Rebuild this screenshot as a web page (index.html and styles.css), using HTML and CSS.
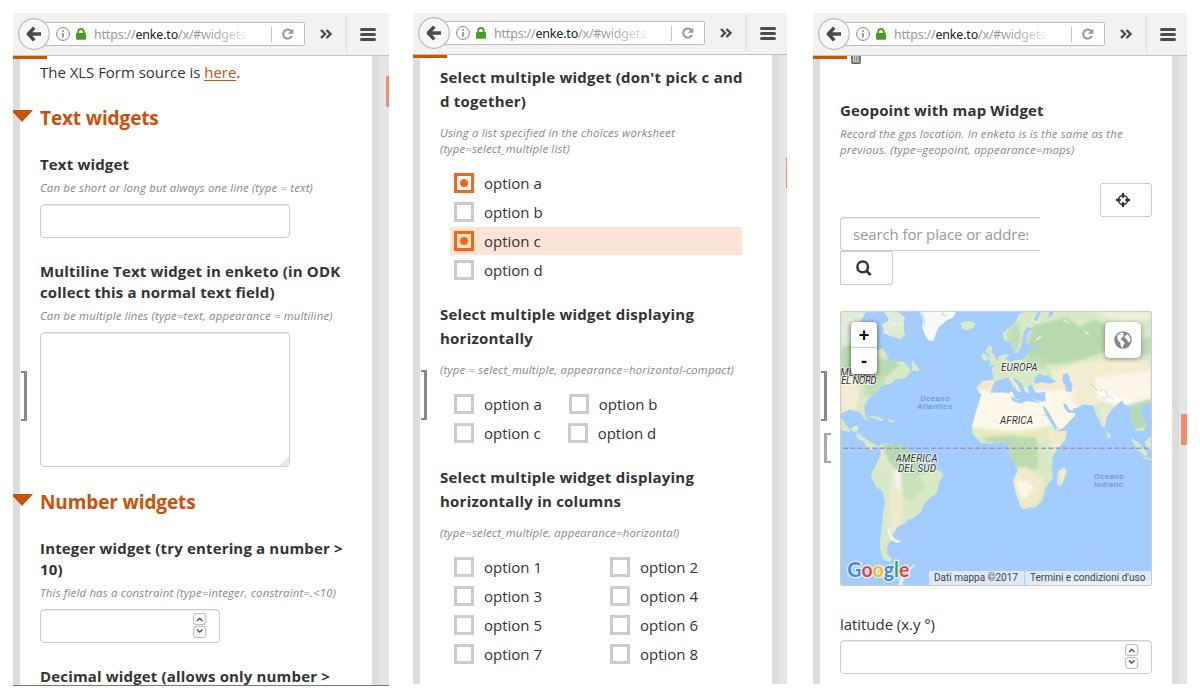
FILE: index.html
```html
<!DOCTYPE html>
<html lang="en">
<head>
<meta charset="utf-8">
<title>Enketo widgets</title>
<link rel="stylesheet" href="styles.css">
</head>
<body>
<svg class="defs" width="0" height="0">
  <symbol id="back" viewBox="0 0 32 32"><circle cx="16" cy="16" r="15.3" fill="#f7f7f6" stroke="#bcbab8" stroke-width="1.2"/><path d="M16.3 9.7 10.3 16l6 6.3M11 16h12" fill="none" stroke="#4b4b4b" stroke-width="3.4" stroke-linejoin="round"/></symbol>
  <symbol id="info" viewBox="0 0 14 14"><circle cx="7" cy="7" r="6.4" fill="none" stroke="#858585" stroke-width="1"/><path d="M7 6v4.5M7 3.2v1.7" stroke="#858585" stroke-width="1.6"/></symbol>
  <symbol id="lock" viewBox="0 0 10 12"><path d="M2.2 6V3.8a2.8 2.8 0 0 1 5.6 0V6" fill="none" stroke="#4a9b25" stroke-width="1.8"/><rect y="5" width="10" height="6.8" rx="1" fill="#4a9b25"/></symbol>
  <symbol id="reload" viewBox="0 0 12 12"><path d="M9.2 3.2A4.5 4.5 0 1 0 9.9 7.8" fill="none" stroke="#8a98a5" stroke-width="2"/><path d="M11.3.4v5.4H5.8z" fill="#8a98a5"/></symbol>
  <symbol id="more" viewBox="0 0 12 10"><path d="M1 1l4 4-4 4M6.5 1l4 4-4 4" fill="none" stroke="#4b4b4b" stroke-width="2.4"/></symbol>
  <symbol id="menu" viewBox="0 0 16 13"><path d="M1.5 1.5h13M1.5 6.5h13M1.5 11.5h13" stroke="#4b4b4b" stroke-width="3" stroke-linecap="round"/></symbol>
  <symbol id="spin" viewBox="0 0 14 26"><rect x=".6" y=".6" width="12.2" height="11" rx="2.5" fill="#fafafa" stroke="#b7b7b7"/><rect x=".6" y="13.4" width="12.2" height="11" rx="2.5" fill="#fafafa" stroke="#b7b7b7"/><path d="M4 8l2.7-2.6L9.400 8M4 16.500l2.700 2.600 2.700-2.600" fill="none" stroke="#444" stroke-width="1.300"/></symbol>
</svg>
<main class="screens">

<section class="screen first">
  <header class="bar">
    <svg class="back"><use href="#back"/></svg>
    <div class="url"><svg class="info"><use href="#info"/></svg><svg class="lock"><use href="#lock"/></svg><span class="addr">https://<b>enke.to</b>/x/#<span class="fade">widgets</span></span><i class="split"></i><svg class="reload"><use href="#reload"/></svg></div>
    <svg class="more"><use href="#more"/></svg><i class="sep"></i><svg class="menu"><use href="#menu"/></svg>
  </header>
  <div class="page">
    <i class="progress"></i>
    <div class="form">
      <p class="intro">The XLS Form source is <a>here</a>.</p>
      <h2 class="head">Text widgets</h2>
      <h3 class="label">Text widget</h3>
      <p class="hint">Can be short or long but always one line (type = text)</p>
      <div class="input wide"></div>
      <h3 class="label after">Multiline Text widget in enketo (in ODK collect this a normal text field)</h3>
      <p class="hint">Can be multiple lines (type=text, appearance = multiline)</p>
      <div class="input wide area"><svg width="9" height="9" viewBox="0 0 9 9"><path d="M9 0v9H0V7h2V5h2V3h2V1h2V0z" fill="#e8e8e8"/></svg></div>
      <h2 class="head second">Number widgets</h2>
      <h3 class="label">Integer widget (try entering a number &gt; 10)</h3>
      <p class="hint">This field has a constraint (type=integer, constraint=.&lt;10)</p>
      <div class="input num"><svg class="spin"><use href="#spin"/></svg></div>
      <h3 class="label after">Decimal widget (allows only number &gt;</h3>
    </div>
    <i class="bracket"></i><i class="thumb t1"></i>
  </div>
</section>

<section class="screen middle">
  <header class="bar">
    <svg class="back"><use href="#back"/></svg>
    <div class="url"><svg class="info"><use href="#info"/></svg><svg class="lock"><use href="#lock"/></svg><span class="addr">https://<b>enke.to</b>/x/#<span class="fade">widgets</span></span><i class="split"></i><svg class="reload"><use href="#reload"/></svg></div>
    <svg class="more"><use href="#more"/></svg><i class="sep"></i><svg class="menu"><use href="#menu"/></svg>
  </header>
  <div class="page">
    <i class="progress"></i>
    <div class="form">
      <h3 class="label">Select multiple widget (don't pick c and d together)</h3>
      <p class="hint">Using a list specified in the choices worksheet (type=select_multiple list)</p>
      <div class="options">
        <div class="opt on"><i class="box"></i>option a</div>
        <div class="opt"><i class="box"></i>option b</div>
        <div class="opt on lit"><i class="box"></i>option c</div>
        <div class="opt"><i class="box"></i>option d</div>
      </div>
      <h3 class="label">Select multiple widget displaying horizontally</h3>
      <p class="hint">(type = select_multiple, appearance=horizontal-compact)</p>
      <div class="options">
        <div class="line"><div class="opt"><i class="box"></i>option a</div><div class="opt compact"><i class="box"></i>option b</div></div>
        <div class="line"><div class="opt"><i class="box"></i>option c</div><div class="opt compact"><i class="box"></i>option d</div></div>
      </div>
      <h3 class="label">Select multiple widget displaying horizontally in columns</h3>
      <p class="hint">(type=select_multiple, appearance=horizontal)</p>
      <div class="options columns">
        <div class="opt"><i class="box"></i>option 1</div><div class="opt"><i class="box"></i>option 2</div>
        <div class="opt"><i class="box"></i>option 3</div><div class="opt"><i class="box"></i>option 4</div>
        <div class="opt"><i class="box"></i>option 5</div><div class="opt"><i class="box"></i>option 6</div>
        <div class="opt"><i class="box"></i>option 7</div><div class="opt"><i class="box"></i>option 8</div>
      </div>
    </div>
    <i class="bracket"></i><i class="thumb t2"></i>
  </div>
</section>

<section class="screen last">
  <header class="bar">
    <svg class="back"><use href="#back"/></svg>
    <div class="url"><svg class="info"><use href="#info"/></svg><svg class="lock"><use href="#lock"/></svg><span class="addr">https://<b>enke.to</b>/x/#<span class="fade">widgets</span></span><i class="split"></i><svg class="reload"><use href="#reload"/></svg></div>
    <svg class="more"><use href="#more"/></svg><i class="sep"></i><svg class="menu"><use href="#menu"/></svg>
  </header>
  <div class="page">
    <i class="progress"></i>
    <div class="form">
      <svg class="trash" width="10" height="8" viewBox="0 0 10 8"><path d="M1 0v6.200q0 1 1 1h6q1 0 1-1V0" fill="#ddd" stroke="#666" stroke-width="1.700"/><path d="M3.500 0v5.500M5.300 0v5.500M7.100 0v5.500" fill="none" stroke="#777" stroke-width=".9"/></svg>
      <h3 class="label">Geopoint with map Widget</h3>
      <p class="hint">Record the gps location. In enketo is is the same as the previous. (type=geopoint, appearance=maps)</p>
      <div class="btn locate"><svg width="14" height="14" viewBox="0 0 14 14"><circle cx="7" cy="7" r="4.600" fill="none" stroke="#333" stroke-width="1.500"/><path d="M7 0v4.700M7 9.300V14M0 7h4.700M9.300 7H14" stroke="#333" stroke-width="2.400"/></svg></div>
      <div class="input search"><span>search for place or address</span></div>
      <div class="btn find"><svg width="16" height="16" viewBox="0 0 16 16"><circle cx="6.700" cy="6.900" r="5.300" fill="none" stroke="#333" stroke-width="2.500"/><path d="M10.500 10.900l4.200 4" stroke="#333" stroke-width="2.700"/></svg></div>
      <div class="map">
        <svg class="world" viewBox="33 36 930 819">
          <defs>
            <filter id="soft" x="-10%" y="-10%" width="120%" height="120%"><feGaussianBlur stdDeviation="5"/></filter>
            <clipPath id="land">
              <path d="M33 36h102l-8 22 25 18 22-12 30 8 18 32-8 14-28-8-30-12-8 6-8 24 14 16 14 14 8 26 20-2 25 4 15 14 7 14-16 20-28 4-12 10-35 12-15 20-20 13-14 26 2 24 9 19-10-4-15-22-30-7-24 11-9 24 8 27 23 5 13-19 16 2-7 24 4 14 19 7 8 20 14 7 17-8 16-13 52 3 27 20 27 10 14 17-4 17 25 4 28 10 15 12-13 21-7 34-21 16-20 21-7 20-22 19-18 6-9 12-22 9-8 14-9 9-2 16-10 18-2 23 17 19-13 5-17-11-9-32 3-38 5-47 7-52-6-28-20-18-15-30 3-12 20-39 7-15-2-18-13-10-22-13-24-17-30-14-18-23-20-27-9-20z"/>
              <path d="M246 181l15 17 7 15-23-1z"/>
              <path d="M162 36l42 0 20 16-3 31 5 28-13-15-28-5-20-18 12-15z"/>
              <path d="M392 68l24-6 20 8-4 12-18 9-18-5z"/>
              <path d="M456 244l35-5-6-34 12-11 10-26 26-7 8 7 14-4-3-13-11-23-19-9-4-20 13-12 22-15 14-29 20-7H963v272l-24 6-10 25 21 35-12 20-22-2-14-39 3-28-20-11-10-13-31 30-16 24-3 24-7 5-23-47-5-20-31-4-18 11-13 1 8 20-12 13-24 25-26 14-6-1-9-31-16-22-12-21-3-16-18-7-18-7-30 9-23-16 1-14-26 2-54 10-10-2-11-18z"/>
              <path d="M459 180l-6-13 8-9 12 9-2 16zM468 154l7-19 12 6-2 15 12 16 5 21-25 6 5-12-9-9 6-10z"/>
              <path d="M455 282l55-6 29 4 8 24 27 7 16-7 46 6 9 16 25 45 10 23 32-1-7 27-25 31-14 24 1 61-20 27-10 38-20 20-32 6-11-2-15-40-10-43 15-31-18-32-12-20 2-26-20-7-35 5-29-2-24-27-1-28 12-42z"/>
              <path d="M703 499l7 15-15 42-11 1-4-14 4-28z"/>
              <path d="M550 251l8 7-10 3zM571 268l16-4-7 10zM538 230l16 6 18 27-7 2-25-27z"/>
              <path d="M833 396l11 10-7 11-6-7zM906 414l23 17 24 29-4 11-25-20-20-30zM940 470l23 6v5l-23-5zM945 425l18-18v40l-12-4z"/>
              <path d="M118 349l27 1 19 10-11 3-22-9-15-1zM171 356l28 7-18 5z"/>
            </clipPath>
          </defs>
          <rect x="33" y="36" width="930" height="819" fill="#a3ccff"/>
          <g clip-path="url(#land)">
            <rect x="33" y="36" width="930" height="819" fill="#d8eac5"/>
            <g filter="url(#soft)">
              <path d="M33 36h230v75l-50-15-50 10-80 5-50 30z" fill="#e2ebda"/>
              <path d="M33 145l55-18 20 45 90 4 10 22-70 54-50-42-55 10z" fill="#b9dbb3"/>
              <path d="M33 210l40 18 15 60-12 42-43-2z" fill="#f3edd4"/>
              <path d="M105 240l48-18 12 25-24 50-40-12z" fill="#c0dfb6"/>
              <path d="M33 330l40 10 12 44-15-5z" fill="#eee9ca"/>
              <path d="M155 420l70-20 72 44 40 25-17 40-60 15-45-3-40-38z" fill="#b6d8ae"/>
              <path d="M215 525l50-5 20 40-40 40-25-10z" fill="#c8e2b8"/>
              <path d="M150 465l38 48 5 60 24-8-5 94-8 50-28-22 8-190-36-50z" fill="#f1e9cd"/>
              <path d="M192 510l20 2-1 60-15-8z" fill="#f8f5ec"/>
              <path d="M610 78l100-26 40 30 40-22 60 20 30 56-60 20-60 22-70 14-90-2-12-50z" fill="#b7d9b0"/>
              <path d="M530 90l38-25 4 57-14 40-22-19zM582 172l60 2 8 34-63-12z" fill="#bfdeb6"/>
              <path d="M795 36h168v20l-80 20z" fill="#eef0d8"/>
              <path d="M850 120l60 6 53-18v54l-80 14-50-14z" fill="#bcdcb4"/>
              <path d="M665 215l80-28 80-7 72-10 66 20v130l-80 6-70-20-45 20-70 4z" fill="#f3edd3"/>
              <path d="M793 235l80-12 90-6v86l-66 12-94-26z" fill="#fbf6e9"/>
              <path d="M800 270l70 22 60 20-10 12-70-13-50-20z" fill="#fffdf7"/>
              <path d="M885 316l78-20v78l-50 16-20-33z" fill="#b9dab0"/>
              <path d="M810 320l40 5-8 70-22-10z" fill="#edeacb"/>
              <path d="M456 240l42 1-16 38-28-8z" fill="#f1eacb"/>
              <path d="M610 250l65-6 22 32-46 6-40-9z" fill="#f0eacc"/>
              <path d="M420 270h300l28 80-50 20-35 8-90 18-155-9z" fill="#fdf7e8"/>
              <path d="M635 270l65 5 60 70-60 50-30-23z" fill="#fdf7e8"/>
              <path d="M418 382l130 13 98-10 30 24-53 20-60 3-140-20z" fill="#e7e9c1"/>
              <path d="M455 413l90-7 30 6 45 0 5 94-72 10-30-80-50-10z" fill="#bcdcb0"/>
              <path d="M653 385l60 8-20 50-30 10z" fill="#f0ebcd"/>
              <path d="M548 503l42-2 55 40-20 65-50 22-40-90z" fill="#f0e9ca"/>
              <path d="M560 545l32-2 20 20-27 33-17-12z" fill="#fcf7ea"/>
            </g>
            <path d="M55 60h12v10h14M100 78l16 8M55 110l13-12M178 65l22 10 15-8M700 60l16 8M764 95l12 8M604 60l24 8M618 120l16-12" fill="none" stroke="#eef4e5" stroke-width="4"/>
            <path d="M808 274l10-5M826 270l6 18-9 9-12-9M780 250l24 22M832 288l20 9M653 344l-15 2" fill="none" stroke="#c9c6c0" stroke-width="2"/>
            <path d="M686 510h26v18l-18 30z" fill="#f1eacb"/>
          </g>
          <g fill="#a3ccff">
            <path d="M108 36h54l-14 30 12 16 2 28-8 34-14 8-17-15-18-4-13-30 8-12-8-28zM97 88l20 4-2 26-20-18z"/>
            <path d="M550 162l14-3 12-28 5-34 10-17 18 6-17 16-3 30 14 9 24-5v7l-31 6-6 19-13 11-24 1-11 8-16-12 6-9z"/>
            <path d="M622 36h11l-13 26-9 0zM657 36h16l-10 14-8 0z"/>
            <path d="M612 245l5-15 9-10 18 8 12-5 4 8 18 14-20 6-22-5-20 6z"/>
            <path d="M698 225l13-7 7 9 2 16 8 8-4 25-17-3-2-18-8-12z"/>
            <path d="M494 244l40-11 28 40 10 4-4-16-18-20 4-7 21 16 10 22 12 10-4-22 12-8 6 16 7 10 28-2v27l-11 2-30-8-18 7-32-8-8-20-66 2z"/>
            <path d="M637 317l8 3 12 18 14 25 11 21-5 7-15-23-18-31zM700 309l10 5 9 16 20 2-4 7-20-1-12-13z"/>
            <path d="M125 184l16-2-7 23z"/>
          </g>
          <g fill="#f1eacb"><path d="M535 232l8-2 20 26-3 9-5 0 1-9z"/><path d="M548 252l7 0-1 10-6 0z"/></g>
          <path d="M269 36h108l-6 15-22 11-25 22-14 38-12 0-12-13-10-28 4-21z" fill="#f7f9fa"/>
          <path d="M273 36l12 25-4 18M342 36l-7 9 17 3" stroke="#dce7d6" stroke-width="5" fill="none"/>
          <path d="M174 680l7 6 3 17 12 14 18 8-14 4-20-10-8-22z" fill="#f3f2e7"/>
          <path d="M205 855l5-24 12 4-4 20zM235 812l12-17 12-3-16 15zM625 855l45-10 35 4 57-7 48 6 70-9 83 3v13z" fill="#e8eff3"/>
          <circle cx="791" cy="685" r="2" fill="#dcece7"/>
          <path d="M39 444.500H963" stroke="#a397ad" stroke-width="4.500" stroke-dasharray="15 7"/>
          <g class="places"><text x="513" y="214" textLength="110">EUROPA</text><text x="510" y="373" textLength="99">AFRICA</text><text x="31" y="227" textLength="105">MERICA</text><text x="33" y="251" textLength="107">EL NORD</text><text x="197" y="486" textLength="126">AMERICA</text><text x="204" y="517" textLength="114">DEL SUD</text></g>
          <g class="seas"><text x="271" y="304" textLength="88">Oceano</text><text x="261" y="327" textLength="106">Atlantico</text><text x="792" y="537" textLength="89">Oceano</text><text x="792" y="560" textLength="87">Indiano</text></g>
          <text class="google" x="52" y="830" textLength="186" lengthAdjust="spacingAndGlyphs"><tspan fill="#4285f4">G</tspan><tspan fill="#ea4335">o</tspan><tspan fill="#fbbc05">o</tspan><tspan fill="#4285f4">g</tspan><tspan fill="#34a853">l</tspan><tspan fill="#ea4335">e</tspan></text>
        </svg>
        <div class="zoom"><span>+</span><span>-</span></div>
        <div class="layers"><svg width="18" height="18" viewBox="0 0 18 18"><circle cx="9" cy="9" r="8.700" fill="#858585"/><path d="M3.200 4.500L7 1.500l3 .6-1 2 1.500.6-2.800 2-1.200 2 2.300 1 2 2-1.600 3-.7 2.500-1.900-2.500-.3-3-2.600-2.500zM12 3l3 1.500 1.700 4-1 3-2-1-1-2.400-2-1 .2-2 1.600-.6z" fill="#fff"/></svg></div>
        <div class="credits"><span>Dati mappa ©2017</span><span>Termini e condizioni d'uso</span></div>
      </div>
      <p class="lat">latitude (x.y °)</p>
      <div class="input full num"><svg class="spin"><use href="#spin"/></svg></div>
    </div>
    <i class="bracket"></i><i class="bracket open"></i><i class="thumb t3"></i>
  </div>
</section>
</main>
</body>
</html>
```
FILE: styles.css
```css
* { box-sizing: border-box; }
body { margin: 0; width: 1200px; height: 700px; overflow: hidden; background: #fff; font-family: "Open Sans", sans-serif; font-size: 15px; color: #333; }
h2, h3, p { margin: 0; }
i { display: block; }
svg { flex: none; display: block; }
.defs { position: absolute; }
.screens { display: grid; grid-template-columns: 376px 374px 374px; column-gap: 24px; padding: 13px; align-items: start; }
.last { margin-left: 2px; margin-right: -2px; }
.screen { height: 671px; display: flex; flex-direction: column; overflow: hidden; }
.first { height: 673px; border-bottom: 1px solid #777; }

.bar { height: 43px; flex: none; display: flex; align-items: center; background: #f3f2f1; border-bottom: 1px solid #c5c3c0; padding-left: 5px; }
.middle .bar { height: 42px; padding-bottom: 1px; }
.back { width: 32px; height: 32px; position: relative; z-index: 1; }
.url { width: 261px; height: 24px; margin-left: -6px; background: #fff; border: 1px solid #bfbdbb; border-radius: 2px; display: flex; align-items: center; padding-left: 11px; }
.info { width: 14px; height: 14px; }
.lock { width: 10px; height: 12px; margin-left: 6px; }
.addr { margin-left: 8px; width: 177px; font-family: "Noto Sans", sans-serif; font-size: 12.5px; letter-spacing: -.2px; color: #999; white-space: nowrap; }
.addr b { font-weight: 400; color: #222; }
.fade { background: linear-gradient(90deg, #999, #aaa 40%, #eee); -webkit-background-clip: text; background-clip: text; color: transparent; }
.split { width: 1px; height: 15px; background: #c4c4c4; }
.reload { width: 12px; height: 12px; margin-left: 10px; }
.more { width: 12px; height: 10px; margin-left: 15px; }
.sep { width: 1px; height: 36px; margin-left: 14px; background: #dcdbd9; }
.menu { width: 16px; height: 13px; margin-left: 13px; }

.page { flex: 1; min-height: 0; position: relative; display: flex; background: #e5e5e5; overflow: hidden; }
.form { width: 366px; border: solid #dcdcdc; border-width: 0 7px; background: #fff; padding-left: 20px; overflow: visible; }
.progress { position: absolute; left: 0; top: 0; width: 34px; height: 3px; background: #d35400; }
.bracket { position: absolute; left: 8px; top: 315px; width: 6px; height: 50px; border: 2px solid #888; border-left: 0; border-right-width: 3px; }
.bracket.open { left: 11px; top: 377px; width: 7px; height: 30px; border: 2px solid #aaa; border-right: 0; border-left-width: 3px; }
.thumb { position: absolute; background: #f0906a; }
.t1 { right: 0; top: 20px; width: 3px; height: 31px; border-radius: 1px 0 0 1px; }
.t2 { right: 0; top: 102px; width: 1px; height: 31px; }
.t3 { right: 0; top: 358px; width: 6px; height: 31px; }

.intro { margin-top: 6px; line-height: 20px; letter-spacing: -.03px; }
.intro a { color: #ce4f07; text-decoration: underline; text-underline-offset: 2px; }
.head { position: relative; margin-top: 24px; line-height: 24px; font-size: 19px; letter-spacing: -.12px; font-weight: 700; color: #ce4f07; }
.head::before { content: ""; position: absolute; left: -29px; top: 4px; border: solid transparent; border-width: 12px 11px 0; border-top-color: #ce4f07; }
.head.second { margin-top: 23px; }
.label { font-size: 15px; line-height: 21px; letter-spacing: .16px; font-weight: 700; width: 312px; }
.head + .label { margin-top: 24px; }
.label.after { margin-top: 23px; }
.hint { margin-top: 5px; font-size: 11.4px; letter-spacing: .17px; line-height: 16px; font-style: italic; color: #888; width: 312px; }
.input { margin-top: 8px; height: 34px; border: 1px solid #ccc; border-radius: 4px; background: #fff; box-shadow: inset 0 1px 1px rgba(0,0,0,.075); }
.wide { width: 250px; }
.area { height: 135px; display: flex; align-items: flex-end; justify-content: flex-end; }
.num { width: 180px; display: flex; justify-content: flex-end; padding: 3px 12px 0 0; }
.spin { width: 14px; height: 26px; }

.middle .label { line-height: 24px; letter-spacing: .23px; width: 306px; }
.middle .form > .label:first-child { margin-top: 10px; }
.middle .hint { margin-top: 12px; }
.options { margin: 12px 0 18px 10px; width: 292px; display: grid; gap: 1px; }
.opt { height: 28px; display: flex; align-items: center; padding-left: 4px; }
.box { width: 20px; height: 20px; margin-right: 10px; border: 3px solid #ccc; display: grid; place-items: center; }
.on .box { border-color: #f86611; }
.on .box::after { content: ""; width: 8px; height: 8px; border-radius: 50%; background: #f86611; }
.lit { background: #ffe4d6; }
.line { display: flex; }
.compact { margin-left: 23px; }
.columns { grid-template-columns: 155px 136px; }

.trash { margin: 0 0 36px 11px; }
.btn { border: 1px solid #ccc; border-radius: 3px; display: flex; align-items: center; height: 34px; }
.locate { width: 52px; margin: 25px 0 0 260px; padding-left: 15px; }
.search { width: 200px; margin: 0; border-right: 0; border-radius: 4px 0 0 4px; color: #999; display: flex; align-items: center; padding: 0 12px; letter-spacing: -.12px; }
.search span { overflow: hidden; white-space: nowrap; }
.find { width: 53px; padding-left: 15px; border-radius: 0 3px 3px 0; }
.map { position: relative; width: 312px; height: 275px; margin-top: 26px; border: 1px solid #ccc; border-radius: 2px; overflow: hidden; }
.world { width: 310px; height: 273px; }
.places, .seas { font-family: Roboto, sans-serif; font-style: italic; }
.places { font-size: 30px; fill: #333; stroke: #fff; stroke-opacity: .8; stroke-width: 5px; paint-order: stroke; }
.seas { font-size: 24px; fill: #5b8bd0; }
.google { font-family: Lato, sans-serif; font-weight: 700; font-size: 61px; stroke: #e9f2fc; stroke-width: 8px; paint-order: stroke; }
.zoom { position: absolute; left: 10px; top: 10px; width: 26px; height: 52px; background: #fff; border-radius: 4px; box-shadow: 0 1px 5px rgba(0,0,0,.65); }
.zoom span { display: block; height: 26px; text-align: center; font: bold 18px/26px "Liberation Sans", sans-serif; color: #000; }
.zoom span + span { height: 27px; margin-top: -1px; border-top: 1px solid #ccc; }
.layers { position: absolute; right: 10px; top: 10px; width: 36px; height: 36px; background: #fff; border-radius: 5px; box-shadow: 0 1px 5px rgba(0,0,0,.4); display: grid; place-items: center; }
.credits { position: absolute; right: 0; bottom: 0; display: flex; gap: 1px; font: 10px/14px Roboto, sans-serif; color: #444; white-space: nowrap; }
.credits span { height: 14px; background: rgba(245,245,245,.7); padding-left: 5px; width: 126px; }
.credits span:first-child { width: 95px; }
.lat { margin-top: 28px; line-height: 20px; letter-spacing: -.05px; }
.full { width: 312px; margin-top: 6px; }
```
